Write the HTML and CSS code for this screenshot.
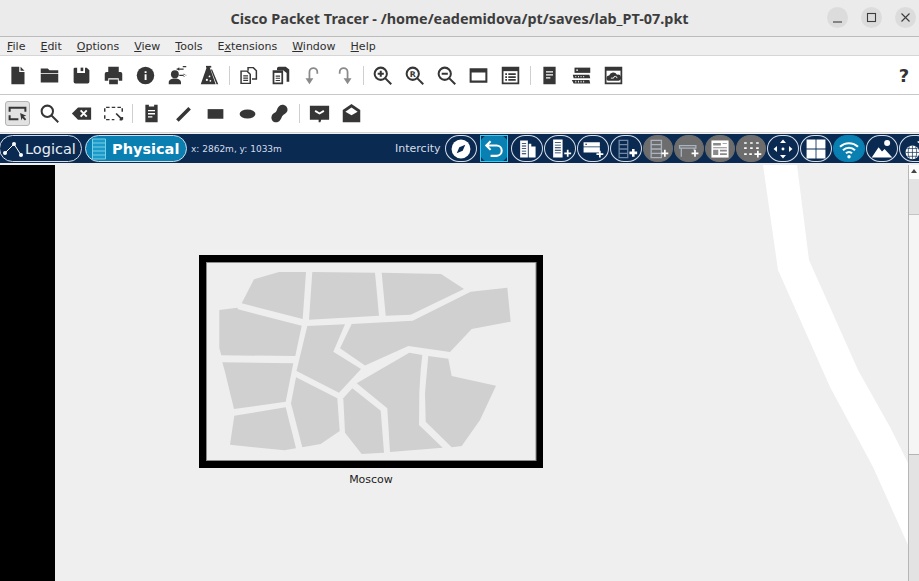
FILE: index.html
```html
<!DOCTYPE html>
<html lang="en">
<head>
<meta charset="utf-8">
<title>Cisco Packet Tracer</title>
<link rel="stylesheet" href="styles.css">
</head>
<body>
<div class="app">
  <header class="titlebar">
    <div class="title">Cisco Packet Tracer - /home/eademidova/pt/saves/lab_PT-07.pkt</div>
    <div class="winbtns">
      <span class="winbtn"><svg viewBox="0 0 21 21"><path d="M6 15h9" class="ws"/></svg></span>
      <span class="winbtn"><svg viewBox="0 0 21 21"><rect x="6.5" y="6.5" width="8" height="8" class="ws"/></svg></span>
      <span class="winbtn"><svg viewBox="0 0 21 21"><path d="M6.5 6.5l8 8M14.5 6.5l-8 8" class="ws"/></svg></span>
    </div>
  </header>

  <nav class="menubar">
    <span><u>F</u>ile</span><span><u>E</u>dit</span><span><u>O</u>ptions</span><span><u>V</u>iew</span><span><u>T</u>ools</span><span>E<u>x</u>tensions</span><span><u>W</u>indow</span><span><u>H</u>elp</span>
  </nav>

  <div class="toolbar">
    <span class="tb"><svg viewBox="0 0 24 24"><path d="M5 2h9v6h6v14H5z"/><path d="M15.500 2l4.500 4.500h-4.500z"/></svg></span>
    <span class="tb"><svg viewBox="0 0 24 24"><path d="M2 4h8l2 2h10v3H2zM2 10h20v10H2z"/></svg></span>
    <span class="tb"><svg viewBox="0 0 24 24"><path d="M4 3h3v6h9V3h2l3 3v13a2 2 0 0 1-2 2H5a2 2 0 0 1-2-2V4z"/><path d="M11 3h3v4h-3z"/></svg></span>
    <span class="tb"><svg viewBox="0 0 24 24"><path d="M6 2h12v6H6zM2 10a2 2 0 0 1 2-2h16a2 2 0 0 1 2 2v8h-4v-3H6v3H2zM7 16.500h10V22H7z"/></svg></span>
    <span class="tb"><svg viewBox="0 0 24 24"><circle cx="12" cy="12" r="10"/><path class="w" d="M11 10.500h2.200V17H11zM11 7h2.200v2H11z"/></svg></span>
    <span class="tb"><svg viewBox="0 0 24 24"><circle cx="9" cy="10.500" r="4.500"/><path d="M2 22v-2c0-3 3-4 5-4.500h4c2 .5 5 1.500 5 4.500v2zM11 4h8v1.500h-8zM11 4.700l3-2v4zM14 11h8v1.500h-8zM22 11.700l-3-2v4zM18 1h4v1.500h-4z"/></svg></span>
    <span class="tb"><svg viewBox="0 0 24 24"><path d="M9 2h3l7 20H2zM15 5l7 17h-2L13.500 5z"/><path d="M8 1h6v2H8z"/><circle class="w" cx="9" cy="17" r="1.200"/><circle class="w" cx="12" cy="13" r="1"/><circle class="w" cx="13" cy="18" r="1"/></svg></span>
    <span class="sep s7"></span>
    <span class="tb"><svg viewBox="0 0 24 24"><path class="ol thinner" d="M11.500 6.500V3h6l3.500 3.500V16h-5"/><path class="ol thinner" d="M3.500 7h7l3.500 3.500V21H3.500z"/><path class="ol thin" d="M6 12.500h5.500M6 15h5.500M6 17.500h5.500"/></svg></span>
    <span class="tb"><svg viewBox="0 0 24 24"><path d="M8 4a2 2 0 0 1 2-2h8l4 3v14h-3V9l-4-3H8z"/><path d="M3 6h12v16H3z"/><path class="w" d="M5 9h8v11H5z"/><path d="M6.500 12h5v1.300h-5zM6.500 14.500h5v1.300h-5zM6.500 17h5v1.300h-5z"/></svg></span>
    <span class="tb mute"><svg viewBox="0 0 24 24"><path class="ols" d="M8.500 16V8a4.500 4.500 0 0 1 9 0v2"/><path d="M4 15h9l-4.500 7z"/></svg></span>
    <span class="tb mute"><svg viewBox="0 0 24 24"><path class="ols" d="M15.500 16V8a4.500 4.500 0 0 0-9 0v2"/><path d="M11 15h9l-4.500 7z"/></svg></span>
    <span class="sep s6"></span>
    <span class="tb"><svg viewBox="0 0 24 24"><circle class="ol" cx="10" cy="10" r="7"/><path class="ol" d="M15 15l7 7M6.500 10h7M10 6.500v7"/></svg></span>
    <span class="tb"><svg viewBox="0 0 24 24"><circle class="ol" cx="10" cy="10" r="7"/><path class="ol" d="M15 15l7 7"/><text class="rmark" x="10" y="13.500">R</text></svg></span>
    <span class="tb"><svg viewBox="0 0 24 24"><circle class="ol" cx="10" cy="10" r="7"/><path class="ol" d="M15 15l7 7M6.500 10h7"/></svg></span>
    <span class="tb"><svg viewBox="0 0 24 24"><path class="ol" d="M3 5h18v14H3zM3 7.500h18"/></svg></span>
    <span class="tb"><svg viewBox="0 0 24 24"><path d="M2 2h20v20H2z"/><path class="w" d="M4 7h16v13H4z"/><path d="M6 9.500h2v2H6zM9.500 9.500h8.500v2H9.500zM6 12.800h2v2H6zM9.500 12.800h8.500v2H9.500zM6 16h2v2H6zM9.500 16h8.500v2H9.500z"/></svg></span>
    <span class="sep s7"></span>
    <span class="tb"><svg viewBox="0 0 24 24"><path d="M5 2h14v20H5z"/><path class="w" d="M8 7h8v1.500H8zM8 10.500h8V12H8zM8 14h5v1.500H8z"/></svg></span>
    <span class="tb"><svg viewBox="0 0 24 24"><path d="M4 3h18v6H4z"/><path class="w" d="M6 5h2v1.500H6z"/><path d="M2 11h19l1 4H3zM1 17h20l1 4H3z"/><path class="w" d="M5 12.500h1v1.500H5zM8 12.500h1v1.500H8zM11 12.500h1v1.500h-1zM14 12.500h1v1.500h-1zM5 18h1v2H5zM8 18h1v2H8zM11 18h1v2h-1zM14 18h1v2h-1z"/></svg></span>
    <span class="tb"><svg viewBox="0 0 24 24"><path d="M2 2h20v20H2z"/><path class="w" d="M4 6.500h16V20H4z"/><path d="M7 18a3 3 0 0 1 0-6 5 5 0 0 1 9-1 3.500 3.500 0 0 1 2 7z"/><path class="wl thinwl" d="M9 15h3a2 2 0 0 1 4 0"/></svg></span>
    <span class="tb help">?</span>
  </div>

  <div class="toolbar second">
    <span class="tb active"><svg viewBox="0 0 24 24"><path class="ol" d="M3 10V5.500h18V10M3 14v4.500h10"/><path d="M15 11.500l7 3-3 1 3 3-1.500 1.500-3-3-1 3z"/></svg></span>
    <span class="tb"><svg viewBox="0 0 24 24"><circle class="ol" cx="9.500" cy="9.500" r="6.500"/><path class="ol" d="M14 14l8 8"/></svg></span>
    <span class="tb"><svg viewBox="0 0 24 24"><path d="M1 12l7-7h15v14H8z"/><path class="wl" d="M11 8.500l7 7M18 8.500l-7 7"/></svg></span>
    <span class="tb"><svg viewBox="0 0 24 24"><path class="ol dash2" d="M2 10V5h20v5M2 14v5h11"/><path class="ols" d="M15 12l7 7M22 19h-3M22 19v-3"/></svg></span>
    <span class="sep s6"></span>
    <span class="tb"><svg viewBox="0 0 24 24"><path d="M5 2h4v2h6V2h4v20H5z"/><path class="w" d="M8 8h8v1.500H8zM8 11.500h8V13H8zM8 15h5v1.500H8z"/></svg></span>
    <span class="tb"><svg viewBox="0 0 24 24"><path class="ol fat" d="M5 20L19 6"/></svg></span>
    <span class="tb"><svg viewBox="0 0 24 24"><path d="M3 7h18v11H3z"/></svg></span>
    <span class="tb"><svg viewBox="0 0 24 24"><ellipse cx="12" cy="12.500" rx="9" ry="5.200"/></svg></span>
    <span class="tb"><svg viewBox="0 0 24 24"><path d="M15 2c4 0 7 3 6 7-1 3-4 3-6 6-1 3-3 7-7 7s-6-4-5-7c1-4 5-3 6-7 1-3 3-6 6-6z"/></svg></span>
    <span class="sep s8"></span>
    <span class="tb"><svg viewBox="0 0 24 24"><path d="M1 3h22v16h-9l-1 3h-2v-3H1z"/><path class="wl" d="M7 9l5 3 5-3"/></svg></span>
    <span class="tb"><svg viewBox="0 0 24 24"><path d="M12 1l10 7v14H2V8z"/><path class="w" d="M12 5l7 5-7 4-7-4z"/></svg></span>
  </div>

  <div class="navbar">
    <div class="pill logical">
      <svg class="pillic" viewBox="0 0 22 22"><path class="nl" d="M3 15L12 6l7 11"/><circle cx="3" cy="15" r="2"/><circle cx="12" cy="6" r="2"/><circle cx="19" cy="17" r="2"/></svg>
      <span>Logical</span>
    </div>
    <div class="pill physical">
      <svg class="pillic phys" viewBox="0 0 14 22"><path d="M.5 1h13v20H.5zM.5 5h13M.5 9h13M.5 13h13M.5 17h13"/></svg>
      <span>Physical</span>
    </div>
    <div class="coords">x: 2862m, y: 1033m</div>
    <div class="loc">Intercity</div>
    <div class="circles">
      <span class="cb"><svg viewBox="0 0 28 28"><circle class="f" cx="14" cy="14" r="11"/><path class="nv" d="M19 9l-3 7-7 3 3-7z"/></svg></span>
      <span class="cb sel"><svg viewBox="0 0 28 28"><path class="rl" d="M6 10h11a5.500 5.500 0 0 1 0 12H10M10 5l-5 5 5 5"/></svg></span>
      <span class="cb"><svg viewBox="0 0 28 28"><path class="f" d="M6 4h9v20H6zM16 8h3v3h5v13h-8z"/><path class="nv" d="M8 7h5v1H8zM8 10h5v1H8zM8 13h5v1H8zM8 16h5v1H8zM8 19h5v1H8z"/></svg></span>
      <span class="cb"><svg viewBox="0 0 28 28"><path class="f" d="M6 3h11v21H6zM19 18h3v-3h2v3h3v2h-3v3h-2v-3h-3z"/><path class="nv" d="M8 6h7v1H8zM8 9h7v1H8zM8 12h7v1H8zM8 15h7v1H8zM8 18h7v1H8z"/></svg></span>
      <span class="cb"><svg viewBox="0 0 28 28"><path class="f" d="M3 6h19v5H3zM3 12h19v6H3zM18 19h3v-3h2v3h3v2h-3v3h-2v-3h-3z"/><path class="nv" d="M5 8h2v1H5z"/></svg></span>
      <span class="cb dim"><svg viewBox="0 0 28 28"><path class="fo" d="M6 4h10v20H6zM6 9h10M6 14h10M6 19h10"/><path class="f" d="M18 17h3v-3h3v3h3v3h-3v3h-3v-3h-3z"/></svg></span>
      <span class="cb grey"><svg viewBox="0 0 28 28"><path class="fo" d="M6 4h12v20H6zM6 9h12M6 14h12M6 19h12"/><path class="f" d="M18 18h3v-3h2v3h3v2h-3v3h-2v-3h-3z"/></svg></span>
      <span class="cb grey"><svg viewBox="0 0 28 28"><path class="fo" d="M3 10h19v3H3zM5 13v10M20 13v3"/><path class="f" d="M17 18h3v-3h2v3h3v2h-3v3h-2v-3h-3z"/></svg></span>
      <span class="cb grey"><svg viewBox="0 0 28 28"><path class="f" d="M4 4h20v20H4z"/><path class="gy" d="M6 7h9v3H6zM17 7h5v1h-5zM6 12h16v1H6zM6 15h6v6H6zM14 15h8v2h-8zM14 19h8v2h-8z"/></svg></span>
      <span class="cb grey"><svg viewBox="0 0 28 28"><path class="f" d="M6 6h3v2H6zM13 6h3v2h-3zM20 6h3v2h-3zM6 12h3v2H6zM13 12h3v2h-3zM20 12h3v2h-3zM6 19h3v2H6zM12 19h3v2h-3zM18 19h3v-3h2v3h3v2h-3v3h-2v-3h-3z"/></svg></span>
      <span class="cb"><svg viewBox="0 0 28 28"><path class="f" d="M14 3l3.500 4h-7zM14 25l3.500-4h-7zM3 14l4-3.500v7zM25 14l-4-3.500v7z"/><circle class="f" cx="14" cy="14" r="1.700"/></svg></span>
      <span class="cb"><svg viewBox="0 0 28 28"><path class="f" d="M3 3h10.500v10.500H3zM14.500 3H25v10.500H14.500zM3 14.500h10.500V25H3zM14.500 14.500H25V25H14.500z"/></svg></span>
      <span class="cb on"><svg viewBox="0 0 28 28"><path class="wifi" d="M3.500 11.500a15 15 0 0 1 21 0M7 15.500a10 10 0 0 1 14 0M10.500 19a5 5 0 0 1 7 0"/><circle class="f" cx="14" cy="23" r="2"/></svg></span>
      <span class="cb"><svg viewBox="0 0 28 28"><path class="f" d="M2 24l8-12 4 5 3-3 9 10z"/><circle class="f" cx="20" cy="7" r="3.500"/></svg></span>
      <span class="cb"><svg viewBox="0 0 28 28"><circle class="f" cx="11" cy="18" r="8"/><path class="nvl" d="M3 18h16M11 10v16M5 13.500h12M5 22.500h12M7.500 11c-2 4-2 10 0 14M14.500 11c2 4 2 10 0 14"/><path class="f" d="M17 5h9v1.500h-9zM17 6l3-2.500v5zM19 11h7v1.500h-7z"/></svg></span>
    </div>
  </div>

  <main class="workspace">
    <div class="blackbar"></div>
    <div class="canvas">
      <svg class="mapsvg" viewBox="55 165 853 416">
        <polygon class="road" points="763,165 778,270 830,387 873,467 908,545 908,463 890,427 858,370 809,260 797,165"/>
        <rect class="frame" x="202.500" y="258.500" width="337" height="206"/>
        <rect class="frameline" x="206.500" y="262.500" width="329.500" height="198"/>
        <g class="land">
          <polygon points="279,272 306,272 302.700,319 241.700,303.300 254,279.300"/>
          <polygon points="312.300,272 375,272.700 379,315.700 309,319.700"/>
          <polygon points="381.700,272.700 441,274 464,289 410.700,314.700 385.700,315.700"/>
          <polygon points="219.300,310 237.300,307.700 238,309.300 301.700,325.700 295.300,356 221.300,355.300 219.300,348"/>
          <polygon points="307.300,326 345,324.300 333.300,351.700 361,369 339,392.700 296.500,371"/>
          <polygon points="351.700,324 412.700,320.700 470.700,291.700 507.300,287.700 510.700,321.700 471.700,329 450,352 408.300,346 365,365.500 340,348.300"/>
          <polygon points="222.300,362.300 293.300,363.300 285.700,401.700 234,409 225,372"/>
          <polygon points="234.300,415.700 285.700,407.300 296,448.300 284.300,450.300 230,444.700"/>
          <polygon points="296,377.300 337.300,398.300 339.700,431 320.700,444 302.300,447.300 291,403.300"/>
          <polygon points="352.300,388.300 380.700,410.700 384,452.700 361.700,454 345,432.700 343.300,398.300"/>
          <polygon points="356.700,383.300 409.300,352.700 422.300,355 420.700,370 419.300,393 419,425 442.700,447.700 390,452 387.300,408.300"/>
          <polygon points="428.300,356 448.300,358.700 451.700,376 496,385.700 480,420 461.700,446 451.700,447.300 425.700,421.700 425,393"/>
        </g>
      </svg>
      <div class="maplabel">Moscow</div>
    </div>
    <div class="scrollbar">
      <div class="sb-up"></div>
      <div class="sb-trough"></div>
      <div class="sb-thumb"></div>
      <div class="sb-rest"></div>
    </div>
  </main>
</div>
</body>
</html>
```
FILE: styles.css
```css
* { box-sizing: border-box; }
html, body { margin: 0; padding: 0; background: #efefef; }
.app { width: 919px; height: 581px; display: flex; flex-direction: column; overflow: hidden; font-family: "DejaVu Sans", sans-serif; }

.titlebar { height: 37px; flex: none; display: flex; align-items: center; justify-content: center; position: relative; background: #ebebeb; border-bottom: 1px solid #bcbcbc; }
.title { font-family: "Noto Sans", sans-serif; font-weight: 700; font-size: 14.400px; color: #3d3d3d; }
.winbtns { position: absolute; right: 3px; top: 7px; display: flex; gap: 13px; }
.winbtn { width: 21px; height: 21px; border-radius: 50%; background: #dcdcdc; display: block; }
.winbtn svg { display: block; width: 21px; height: 21px; }
.ws { fill: none; stroke: #3d3d3d; stroke-width: 1.1; }

.menubar { height: 19px; flex: none; display: flex; align-items: center; gap: 15px; padding: 1px 0 0 7px; background: #efefef; border-bottom: 1px solid #d6d6d6; font-size: 11px; color: #2e2e2e; }

.toolbar { height: 39px; flex: none; display: flex; align-items: center; padding-left: 1px; background: #fff; border-bottom: 1px solid #c8c8c8; }
.toolbar.second { height: 38px; border-bottom: 1px solid #d4d4d4; }
.tb { width: 32px; height: 30px; flex: none; display: flex; align-items: center; justify-content: center; }
.tb svg { width: 21px; height: 21px; display: block; fill: #363636; }
.tb.active { width: 25px; height: 25px; margin: 0 3px 0 4px; background: #e2e2e2; border: 1px solid #b4b4b4; border-radius: 3px; }
.tb.active svg { width: 21px; height: 21px; }
.tb.mute svg { fill: #8a8a8a; }
.tb.help { margin-left: auto; padding-left: 2px; font-family: "DejaVu Sans", sans-serif; font-weight: 700; font-size: 18px; color: #333; }
.w { fill: #fff; }
.ol { fill: none; stroke: #363636; stroke-width: 2.300; }
.ol.thinner { stroke-width: 1.700; }
.ol.thin { stroke-width: 1.300; }
.ol.fat { stroke-width: 4; }
.ol.dash2 { stroke-width: 1.700; stroke-dasharray: 4 2.500; }
.ols { fill: none; stroke: #363636; stroke-width: 2; }
.tb.mute .ols { stroke: #8a8a8a; }
.wl { fill: none; stroke: #fff; stroke-width: 2.200; }
.wl.thinwl { stroke-width: 1; }
.rmark { font-size: 9px; font-weight: 700; text-anchor: middle; fill: #363636; font-family: "DejaVu Sans", sans-serif; }
.sep { flex: none; height: 19px; position: relative; }
.sep::after { content: ""; position: absolute; left: 50%; top: 0; bottom: 0; width: 1px; background: #cfcfcf; }
.s6 { width: 6px; }
.s7 { width: 7px; }
.s8 { width: 8px; }

.navbar { height: 29px; flex: none; margin-top: 1px; display: flex; align-items: center; background: #0b2a52; color: #fff; overflow: hidden; white-space: nowrap; }
.pill { height: 27px; flex: none; display: flex; align-items: center; border: 1px solid #d5dde8; border-radius: 14px; }
.pill.logical { width: 83px; margin-left: -1px; padding-left: 2px; gap: 1px; font-size: 14.500px; color: #e8edf3; }
.pill.physical { width: 102px; margin-left: 3px; padding-left: 6px; gap: 6px; background: #0a7fb1; font-size: 14.500px; font-weight: 700; }
.pillic { width: 22px; height: 22px; flex: none; fill: #fff; }
.nl { fill: none; stroke: #fff; stroke-width: 1; }
.pillic.phys { width: 14px; fill: #1b9ac9; stroke: #77d0e8; stroke-width: 1; }
.coords { width: 208px; flex: none; padding-left: 4px; font-size: 9px; color: #d5dde8; }
.loc { width: 50px; flex: none; font-size: 11px; color: #d5dde8; }
.circles { display: flex; gap: 1px; flex: none; }
.cb { width: 32px; height: 27px; flex: none; display: flex; align-items: center; justify-content: center; border: 1px solid #d5dde8; border-radius: 14px / 13.500px; }
.cb svg { width: 24px; height: 24px; display: block; }
.cb.sel { background: radial-gradient(circle at center, #0a7fb1 15px, #0b2a52 16px); border: 1px solid #38cdf0; border-radius: 0; width: 28px; margin: 0 2px; }
.cb.on { background: #0a7fb1; border-color: #0a7fb1; }
.cb.grey { width: 30px; background: #6d6d6d; border-color: #6d6d6d; }
.f { fill: #fff; }
.nv { fill: #0b2a52; }
.gy { fill: #8a8a8a; }
.fo { fill: none; stroke: #aab4c0; stroke-width: 1.500; }
.cb.dim .fo { stroke: #7088a6; }
.nvl { fill: none; stroke: #0b2a52; stroke-width: .8; }
.rl { fill: none; stroke: #fff; stroke-width: 2.400; }
.wifi { fill: none; stroke: #fff; stroke-width: 2.400; }

.workspace { flex: 1; min-height: 0; margin-top: 2px; display: flex; background: #efefef; }
.blackbar { width: 55px; flex: none; background: #000; }
.canvas { width: 853px; flex: none; position: relative; background: #efefef; overflow: hidden; }
.mapsvg { display: block; width: 853px; height: 416px; }
.road { fill: #fff; }
.frame { fill: none; stroke: #000; stroke-width: 7; }
.frameline { fill: #eeeeee; stroke: #8c8c8c; stroke-width: 1; }
.land polygon { fill: #d0d0d0; }
.maplabel { position: absolute; left: 276px; top: 308px; width: 80px; text-align: center; font-size: 11px; color: #1c1c1c; }

.scrollbar { width: 11px; flex: none; display: flex; flex-direction: column; border-left: 1px solid #b6b6b6; background: #e3e3e3; }
.sb-up { height: 14px; background: #fbfbfb; position: relative; }
.sb-up::after { content: ""; position: absolute; left: 1.500px; top: 4px; border-left: 3.500px solid transparent; border-right: 3.500px solid transparent; border-bottom: 4px solid #444; }
.sb-trough { height: 35px; background: #e3e3e3; }
.sb-thumb { height: 241px; background: #f5f5f5; border-top: 1px solid #c4c4c4; border-bottom: 1px solid #b4b4b4; }
.sb-rest { flex: 1; background: #e3e3e3; }
```
